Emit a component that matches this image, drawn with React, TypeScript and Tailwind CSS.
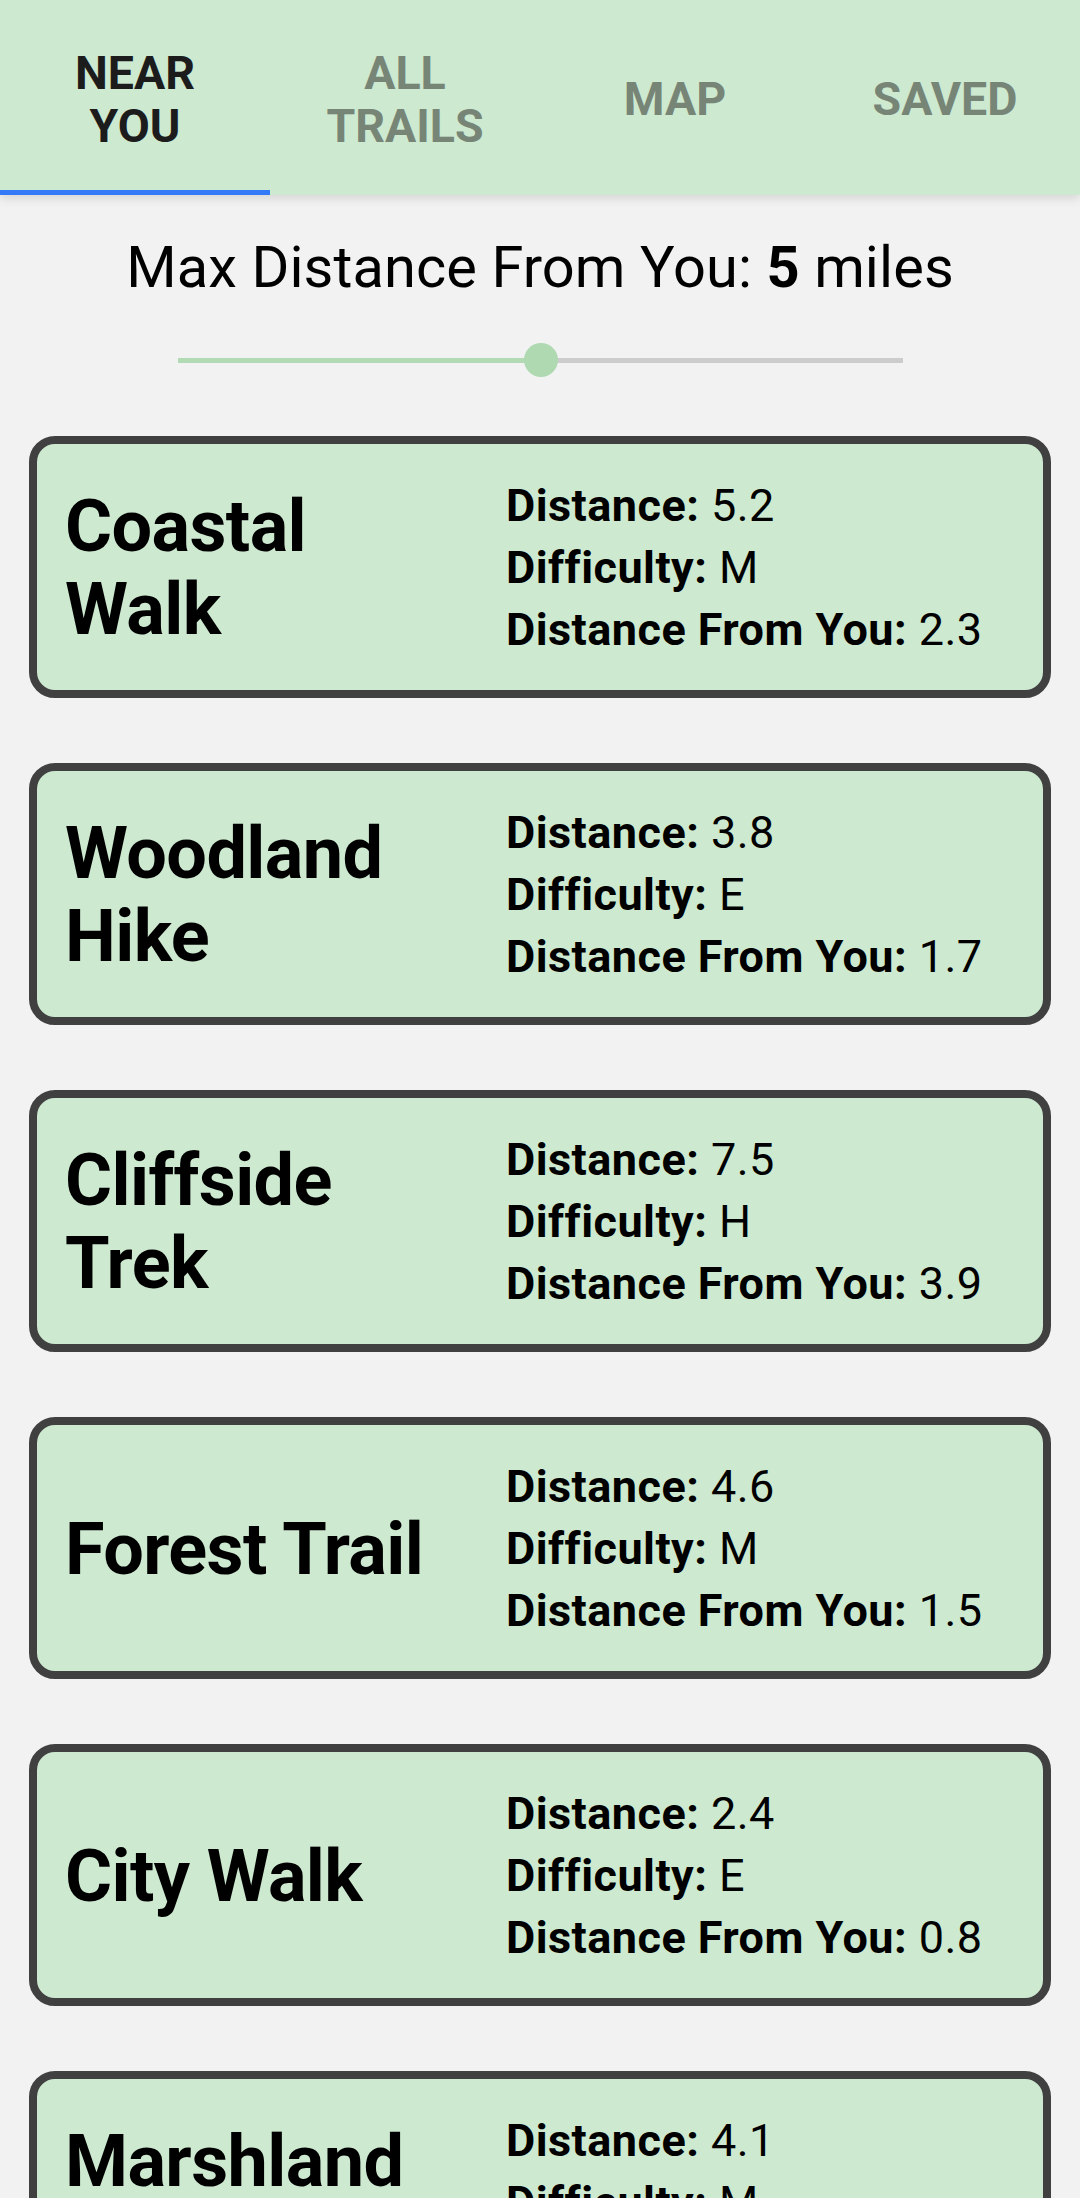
import React from "react";

type Trail = {
  name: string;
  distance: string;
  difficulty: string;
  fromYou: string;
};

const trails: Trail[] = [
  { name: "Coastal Walk", distance: "5.2", difficulty: "M", fromYou: "2.3" },
  { name: "Woodland Hike", distance: "3.8", difficulty: "E", fromYou: "1.7" },
  { name: "Cliffside Trek", distance: "7.5", difficulty: "H", fromYou: "3.9" },
  { name: "Forest Trail", distance: "4.6", difficulty: "M", fromYou: "1.5" },
  { name: "City Walk", distance: "2.4", difficulty: "E", fromYou: "0.8" },
  { name: "Marshland Loop", distance: "4.1", difficulty: "M", fromYou: "4.4" },
];

const tabs = [
  { label: "NEAR\nYOU", active: true },
  { label: "ALL\nTRAILS", active: false },
  { label: "MAP", active: false },
  { label: "SAVED", active: false },
];

function TabBar() {
  return (
    <div className="relative z-10 flex h-[195px] bg-[#cde9d0] shadow-[0_3px_10px_rgba(0,0,0,0.13)]">
      {tabs.map((t) => (
        <div
          key={t.label}
          className="relative flex w-[270px] items-center justify-center pt-[4px]"
        >
          <span
            className={
              "whitespace-pre-line text-center text-[46.5px] leading-[53px] font-bold " +
              (t.active ? "text-[#1c1c1c]" : "text-[#778577]")
            }
          >
            {t.label}
          </span>
          {t.active && (
            <div className="absolute bottom-0 left-0 h-[5px] w-[270px] bg-[#3479f5]" />
          )}
        </div>
      ))}
    </div>
  );
}

function DistanceSlider() {
  return (
    <div className="flex flex-col items-center">
      <div className="mt-[38px] text-[57.75px] leading-[68px] text-black tracking-[0.1px]">
        Max Distance From You: <span className="font-bold">5</span> miles
      </div>
      <div className="relative mt-[42px] flex h-[34px] w-[725px] items-center">
        <div className="h-[5px] w-1/2 bg-[#b2dbb5]" />
        <div className="h-[5px] w-1/2 bg-[#cccccc]" />
        <div className="absolute left-[346px] top-0 h-[34px] w-[34px] rounded-full bg-[#aed9b1]" />
      </div>
    </div>
  );
}

function TrailCard({ trail }: { trail: Trail }) {
  return (
    <div className="flex items-center rounded-[26px] border-[8px] border-[#404040] bg-[#cde9d0] pl-[28px] pr-[20px] pt-[31px] pb-[29px]">
      <div className="w-[441px] shrink-0 pr-[60px] text-[72px] leading-[83px] font-bold tracking-[-0.6px] text-black">
        {trail.name}
      </div>
      <div className="text-[45px] leading-[62px] tracking-[0.45px] text-black">
        <div>
          <span className="font-bold">Distance:</span> {trail.distance}
        </div>
        <div>
          <span className="font-bold">Difficulty:</span> {trail.difficulty}
        </div>
        <div>
          <span className="font-bold">Distance From You:</span> {trail.fromYou}
        </div>
      </div>
    </div>
  );
}

export default function App() {
  return (
    <div className="min-h-screen bg-[#f2f2f2] font-['Roboto',sans-serif]">
      <TabBar />
      <DistanceSlider />
      <div className="mt-[59px] flex flex-col gap-[65px] px-[29px] pb-[60px]">
        {trails.map((t) => (
          <TrailCard key={t.name} trail={t} />
        ))}
      </div>
    </div>
  );
}
